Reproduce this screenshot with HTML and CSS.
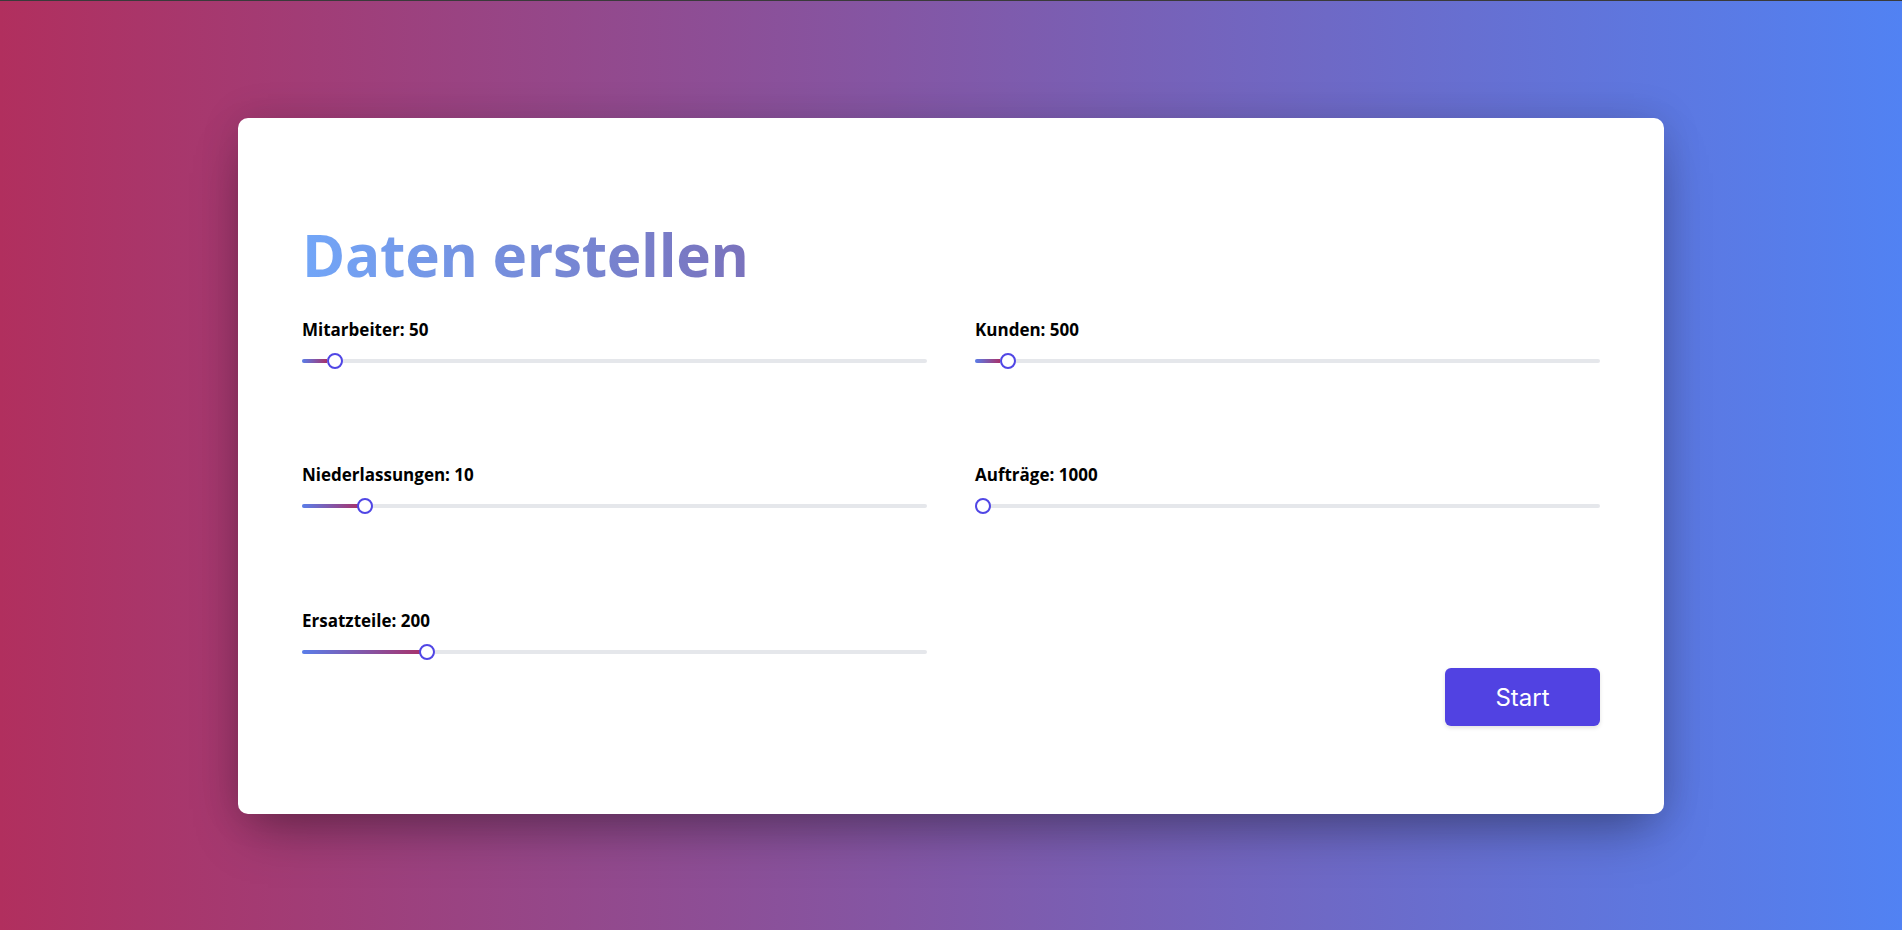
FILE: index.html
```html
<!DOCTYPE html>
<html lang="de">
<head>
<meta charset="utf-8">
<title>Daten erstellen</title>
<link rel="stylesheet" href="styles.css">
</head>
<body>
<div class="page">
  <main class="card">
    <h1 class="title">Daten erstellen</h1>
    <div class="grid">
      <div class="field">
        <label class="label">Mitarbeiter: 50</label>
        <div class="slider">
          <div class="track"><div class="fill" style="width:4.04%"></div></div>
          <div class="thumb-lane"><span class="thumb" style="left:4.04%"></span></div>
        </div>
      </div>
      <div class="field">
        <label class="label">Kunden: 500</label>
        <div class="slider">
          <div class="track"><div class="fill" style="width:4.04%"></div></div>
          <div class="thumb-lane"><span class="thumb" style="left:4.04%"></span></div>
        </div>
      </div>
      <div class="field">
        <label class="label">Niederlassungen: 10</label>
        <div class="slider">
          <div class="track"><div class="fill" style="width:9.09%"></div></div>
          <div class="thumb-lane"><span class="thumb" style="left:9.09%"></span></div>
        </div>
      </div>
      <div class="field">
        <label class="label">Aufträge: 1000</label>
        <div class="slider">
          <div class="track"><div class="fill" style="width:0%"></div></div>
          <div class="thumb-lane"><span class="thumb" style="left:0%"></span></div>
        </div>
      </div>
      <div class="field">
        <label class="label">Ersatzteile: 200</label>
        <div class="slider">
          <div class="track"><div class="fill" style="width:19.19%"></div></div>
          <div class="thumb-lane"><span class="thumb" style="left:19.19%"></span></div>
        </div>
      </div>
    </div>
    <div class="actions">
      <button class="start" type="button">Start</button>
    </div>
  </main>
</div>
</body>
</html>
```
FILE: styles.css
```css
* { box-sizing: border-box; }
html, body { margin: 0; padding: 0; }
body {
  font-family: "Open Sans", "Liberation Sans", sans-serif;
  color: #000;
}
.page {
  min-height: 930px;
  height: 930px;
  border-top: 1px solid #3a3a3a;
  background: linear-gradient(to right, #b12f5e 0%, #5182f3 100%);
  display: flex;
  align-items: center;
  justify-content: center;
}
.card {
  width: 1426px;
  height: 696px;
  background: #fff;
  border-radius: 10px;
  padding: 106px 64px 0 64px;
  box-shadow: 0 25px 50px -12px rgba(0,0,0,0.35), 0 0 40px rgba(0,0,0,0.12);
}
.title {
  display: inline-block;
  margin: 0;
  font-family: "Open Sans", sans-serif;
  font-weight: 700;
  font-size: 58.5px;
  line-height: 60px;
  letter-spacing: -0.3px;
  background: linear-gradient(to right, #72a6f8, #7a72bc);
  -webkit-background-clip: text;
  background-clip: text;
  color: transparent;
}
.grid {
  margin-top: 34px;
  display: grid;
  grid-template-columns: 1fr 1fr;
  column-gap: 48px;
  row-gap: 94.5px;
}
.field {
  display: flex;
  flex-direction: column;
}
.label {
  font-weight: 700;
  font-size: 17px;
  line-height: 24px;
  margin-bottom: 11px;
}
.slider {
  position: relative;
  height: 16px;
  display: flex;
  align-items: center;
}
.track {
  width: 100%;
  height: 4px;
  border-radius: 2px;
  background: #e5e7eb;
  overflow: hidden;
}
.fill {
  height: 100%;
  background: linear-gradient(to right, #5a7de9, #a8326b);
}
.thumb-lane {
  position: absolute;
  left: 8px;
  right: 8px;
  top: 0;
  height: 16px;
}
.thumb {
  position: absolute;
  top: 0;
  width: 16px;
  height: 16px;
  margin-left: -8px;
  border-radius: 50%;
  background: #fff;
  border: 2px solid #5046e5;
}
.actions {
  margin-top: 8.5px;
  display: flex;
  justify-content: flex-end;
}
.start {
  width: 155px;
  height: 58px;
  border: none;
  border-radius: 6px;
  background: #5142e2;
  color: #fff;
  font-family: "Inter", "Roboto", sans-serif;
  font-size: 24px;
  font-weight: 400;
  box-shadow: 0 2px 4px rgba(0,0,0,0.12);
  cursor: pointer;
}
```
